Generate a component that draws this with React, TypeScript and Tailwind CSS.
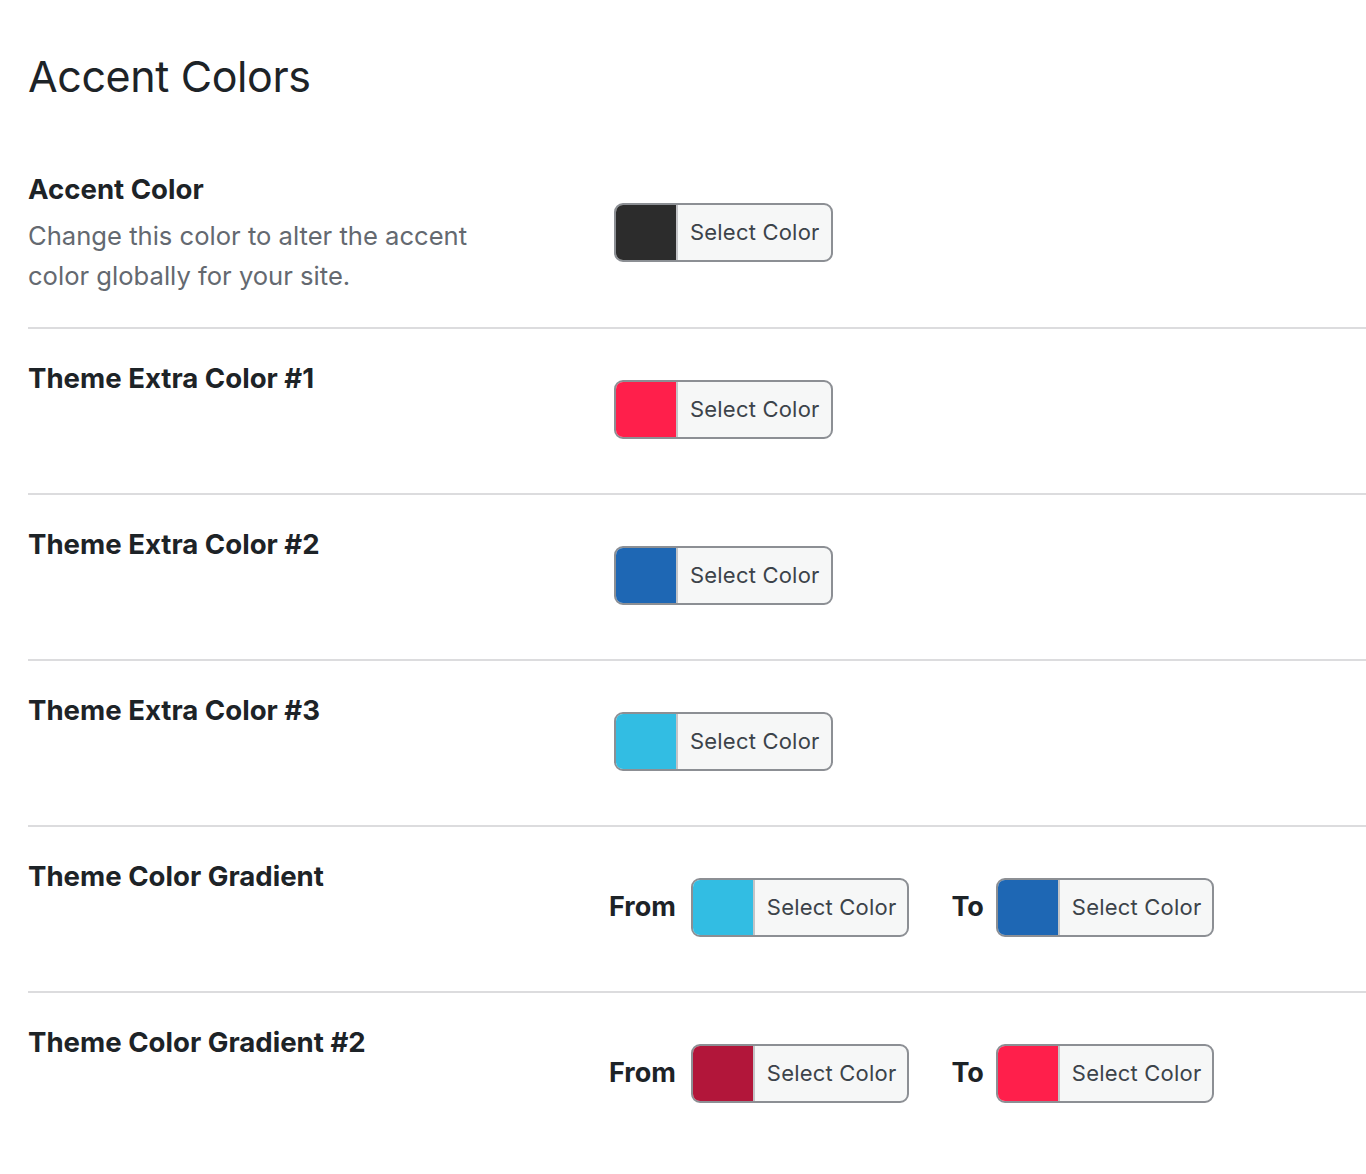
import React from "react";

type Swatch = { color: string };

function ColorButton({ color }: Swatch) {
  return (
    <button
      type="button"
      className="flex h-[59px] items-stretch overflow-hidden rounded-[9px] border-2 border-[#8c8f94] bg-[#f6f7f7]"
    >
      <span className="w-[62px] shrink-0 border-r-2 border-[#c3c4c7]" style={{ backgroundColor: color }} />
      <span className="flex items-center pl-[12px] pr-[11px] text-[22px] tracking-[0.2px] text-[#3c434a]">Select Color</span>
    </button>
  );
}

function GradientPicker({ from, to }: { from: string; to: string }) {
  return (
    <div className="flex items-center">
      <span className="mr-[15px] text-[27px] font-bold text-[#1d2327]">From</span>
      <ColorButton color={from} />
      <span className="ml-[42px] mr-[12px] text-[27px] font-bold text-[#1d2327]">To</span>
      <ColorButton color={to} />
    </div>
  );
}

const extras = [
  { label: "Theme Extra Color #1", color: "#ff1f4b" },
  { label: "Theme Extra Color #2", color: "#1e67b4" },
  { label: "Theme Extra Color #3", color: "#32bde3" },
];

const gradients = [
  { label: "Theme Color Gradient", from: "#32bde3", to: "#1e67b4" },
  { label: "Theme Color Gradient #2", from: "#b2163a", to: "#ff1f4b" },
];

export default function App() {
  return (
    <div className="min-h-[1174px] bg-white pl-[28px] pt-[49px]" style={{ fontFamily: "Inter, 'Noto Sans', sans-serif" }}>
      <h2 className="text-[43px] leading-[54px] font-normal tracking-[-0.4px] text-[#1d2327]">Accent Colors</h2>

      <div className="mt-[66px]">
        <div className="flex border-b-2 border-[#dcdcde] pb-[31px]">
          <div className="w-[586px] shrink-0">
            <div className="pt-[2px] text-[27.6px] leading-[36px] font-bold text-[#1d2327]">Accent Color</div>
            <p className="mt-[9px] w-[470px] text-[25.6px] leading-[40px] text-[#646970]">
              Change this color to alter the accent color globally for your site.
            </p>
          </div>
          <div className="pt-[34px]">
            <ColorButton color="#2c2c2c" />
          </div>
        </div>

        {extras.map((row) => (
          <div key={row.label} className="flex h-[166px] border-b-2 border-[#dcdcde]">
            <div className="w-[586px] shrink-0 pt-[31px] text-[27.6px] leading-[36px] font-bold text-[#1d2327]">
              {row.label}
            </div>
            <div className="pt-[51px]">
              <ColorButton color={row.color} />
            </div>
          </div>
        ))}

        {gradients.map((row, i) => (
          <div
            key={row.label}
            className={`flex h-[166px] ${i === 0 ? "border-b-2 border-[#dcdcde]" : ""}`}
          >
            <div className="w-[581px] shrink-0 pt-[31px] text-[27.6px] leading-[36px] font-bold text-[#1d2327]">
              {row.label}
            </div>
            <div className="pt-[51px]">
              <GradientPicker from={row.from} to={row.to} />
            </div>
          </div>
        ))}
      </div>
    </div>
  );
}
